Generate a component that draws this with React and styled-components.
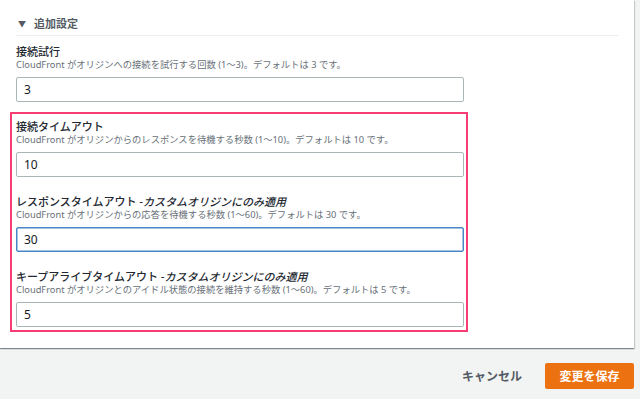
import styled, { createGlobalStyle } from "styled-components";

const GlobalStyle = createGlobalStyle`
    * {
        box-sizing: border-box;
    }

    body {
        margin: 0;
        background-color: #F2F3F3;
        font-family: "Noto Sans", "Noto Sans CJK JP", sans-serif;
    }
`

const fields = [
    {
        id: "attempts",
        label: "接続試行",
        desc: "CloudFront がオリジンへの接続を試行する回数 (1〜3)。デフォルトは 3 です。",
        value: "3",
    },
];

const highlighted = [
    {
        id: "timeout",
        label: "接続タイムアウト",
        desc: "CloudFront がオリジンからのレスポンスを待機する秒数 (1〜10)。デフォルトは 10 です。",
        value: "10",
    },
    {
        id: "response",
        label: "レスポンスタイムアウト",
        note: "カスタムオリジンにのみ適用",
        desc: "CloudFront がオリジンからの応答を待機する秒数 (1〜60)。デフォルトは 30 です。",
        value: "30",
        focused: true,
    },
    {
        id: "keepalive",
        label: "キープアライブタイムアウト",
        note: "カスタムオリジンにのみ適用",
        desc: "CloudFront がオリジンとのアイドル状態の接続を維持する秒数 (1〜60)。デフォルトは 5 です。",
        value: "5",
    },
];

function Field({ field }) {
    return (
        <FieldBlock>
            <Label htmlFor={field.id}>
                {field.label}
                {field.note && <em> -{field.note}</em>}
            </Label>
            <Description>{field.desc}</Description>
            <Input id={field.id} defaultValue={field.value} $focused={field.focused} />
        </FieldBlock>
    );
}

function App() {
    return (
        <Page>
            <GlobalStyle />
            <Panel>
                <SectionHeader>
                    <Caret>▼</Caret>
                    <h2>追加設定</h2>
                </SectionHeader>

                {fields.map((f) => (
                    <Field key={f.id} field={f} />
                ))}

                <Highlight>
                    {highlighted.map((f) => (
                        <Field key={f.id} field={f} />
                    ))}
                </Highlight>
            </Panel>

            <Actions>
                <CancelButton>キャンセル</CancelButton>
                <SaveButton>変更を保存</SaveButton>
            </Actions>
        </Page>
    );
}

const Page = styled.div`
    width: 640px;
    height: 399px;
    overflow: hidden;
    background-color: #F2F3F3;
`

const Panel = styled.div`
    width: 634px;
    background: #FFFFFF;
    padding: 0 16px 16px 16px;
    box-shadow: 0 1px 1px 0 rgba(0, 28, 36, 0.3), 1px 1px 1px 0 rgba(0, 28, 36, 0.15), -1px 1px 1px 0 rgba(0, 28, 36, 0.15);
`

const SectionHeader = styled.div`
    display: flex;
    align-items: center;
    padding: 16px 0 3px 2px;
    border-bottom: 1px solid #EAEDED;

    >h2 {
        margin: 0;
        font-size: 11px;
        line-height: 16px;
        font-weight: 700;
        color: #545B64;
    }
`

const Caret = styled.span`
    width: 16px;
    font-size: 8px;
    line-height: 16px;
    color: #545B64;
`

const FieldBlock = styled.div`
    display: flex;
    flex-direction: column;
    margin-top: 9px;
`

const Label = styled.label`
    font-size: 11px;
    line-height: 14px;
    font-weight: 500;
    color: #232830;

    >em {
        font-style: italic;
    }
`

const Description = styled.span`
    font-size: 9.3px;
    line-height: 12px;
    color: #687078;
`

const Input = styled.input`
    width: 448px;
    height: 25px;
    margin-top: 6px;
    padding: 0 7px;
    border: 1px solid ${(p) => (p.$focused ? "#4A86C6" : "#AAB7B8")};
    box-shadow: ${(p) => (p.$focused ? "inset 0 0 0 0.5px #4A86C6" : "none")};
    border-radius: 2px;
    font-family: "Noto Sans", "Noto Sans CJK JP", sans-serif;
    font-size: 12px;
    color: #16191F;
    background: #FFFFFF;
    outline: none;
`

const Highlight = styled.div`
    width: 458px;
    margin: 10px 0 0 -6px;
    padding: 6px 2px 3px 4px;
    border: 2px solid #F73B73;
    display: flex;
    flex-direction: column;
    gap: 18px;

    >div {
        margin-top: 0;
    }
`

const Actions = styled.div`
    display: flex;
    justify-content: flex-end;
    align-items: center;
    padding: 15px 6px 0 0;
`

const CancelButton = styled.button`
    height: 26px;
    padding: 0 20px;
    margin-right: 3px;
    border: none;
    background: transparent;
    font-family: "Noto Sans", "Noto Sans CJK JP", sans-serif;
    font-size: 12px;
    font-weight: 700;
    color: #545B64;
`

const SaveButton = styled.button`
    width: 89px;
    height: 26px;
    border: none;
    border-radius: 2px;
    background: #EC7211;
    font-family: "Noto Sans", "Noto Sans CJK JP", sans-serif;
    font-size: 12px;
    font-weight: 700;
    color: #FFFFFF;
`

export default App;
